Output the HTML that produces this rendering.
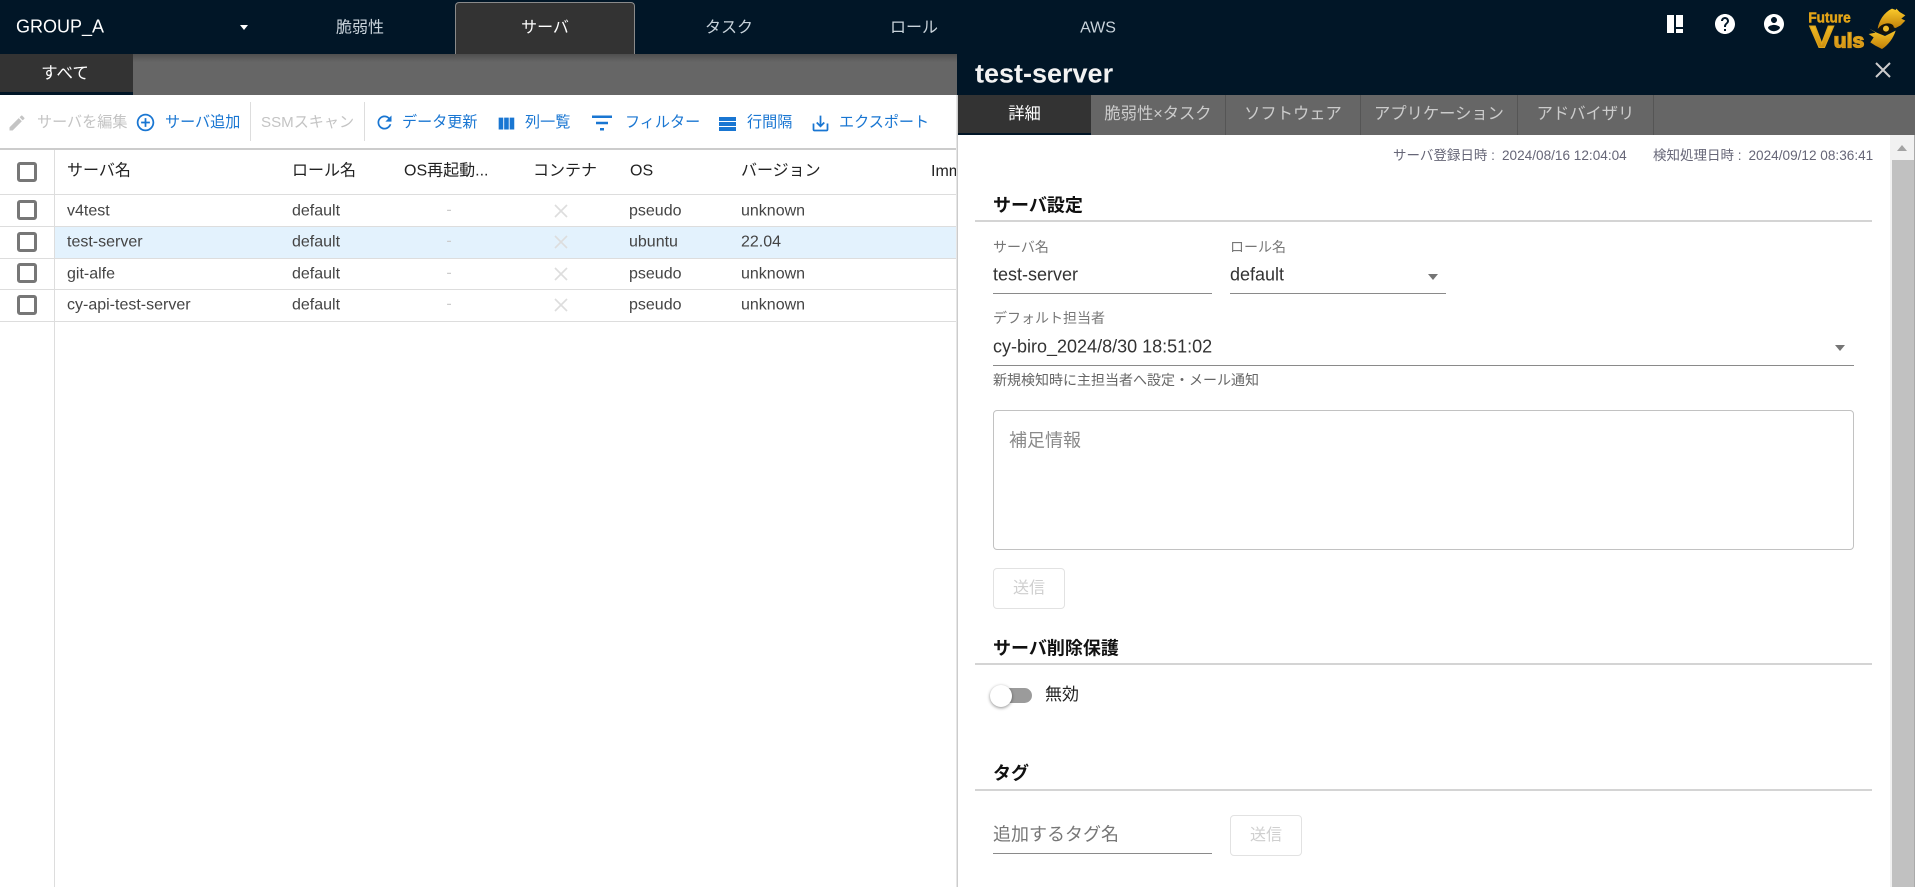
<!DOCTYPE html>
<html lang="ja"><head><meta charset="utf-8"><title>test-server</title>
<style>
html,body{margin:0;padding:0;width:1915px;height:887px;overflow:hidden;background:#fff}
body{position:relative;font-family:"Liberation Sans","Noto Sans CJK JP",sans-serif;font-size:16px;color:#333}
.a{position:absolute}
.t{position:absolute;white-space:nowrap;transform:translateY(-50%);line-height:1.3}
.c{position:absolute;white-space:nowrap;transform:translate(-50%,-50%);line-height:1.3}
.tb{font-size:15.1px;color:#1976d2}
.dis{color:#c4c4c4}
.th{color:#222}
.td{color:#444}
.cb{position:absolute;left:16.5px;width:20px;height:20px;box-sizing:border-box;border:3px solid #777;border-radius:3px;background:#fff}
.hl{position:absolute;left:0;width:956px;height:1px;background:#ddd}
.i{position:absolute;display:block}
.sec{position:absolute;left:975px;width:897px;height:2px;background:#d4d4d4}
.h{font-size:18px;font-weight:bold;color:#111}
.ln{position:absolute;height:1px;background:#8a8a8a}
.lab{font-size:14px;color:#777}
.car{position:absolute;width:0;height:0;border-left:5px solid transparent;border-right:5px solid transparent;border-top:6px solid #757575}
.btn{position:absolute;width:72px;height:41px;box-sizing:border-box;border:1px solid #e2e2e2;border-radius:4px;color:#cfcfcf;text-align:center;line-height:39px;font-size:16px}
.ptab{position:absolute;top:95px;height:40px;box-sizing:border-box;border-right:1px solid #555;color:#ccc;text-align:center;line-height:39px;font-size:16.3px}
</style></head><body>

<!-- Top bar -->
<div class="a" style="left:0;top:0;width:1915px;height:54px;background:#011627"></div>
<div class="t" style="left:16px;top:27px;color:#fff;font-size:18px">GROUP_A</div>
<div class="car" style="left:240px;top:25px;border-top-color:#fff;border-left-width:4.5px;border-right-width:4.5px;border-top-width:5px"></div>
<div class="a" style="left:455px;top:2px;width:180px;height:52px;box-sizing:border-box;background:#333;border:1px solid #8a8a8a;border-bottom:0;border-radius:4px 4px 0 0"></div>
<div class="c" style="left:360px;top:29px;color:#c9d3db">脆弱性</div>
<div class="c" style="left:545px;top:29px;color:#fff">サーバ</div>
<div class="c" style="left:729px;top:29px;color:#c9d3db">タスク</div>
<div class="c" style="left:914px;top:29px;color:#c9d3db">ロール</div>
<div class="c" style="left:1098px;top:29px;color:#c9d3db;font-size:16px">AWS</div>

<div class="a" style="left:1667px;top:15px;width:7px;height:18px;background:#fff"></div>
<div class="a" style="left:1676px;top:15px;width:7px;height:12px;background:#fff"></div>
<div class="a" style="left:1676px;top:29px;width:7px;height:4px;background:#fff"></div>
<svg class="i" style="left:1713px;top:12px" width="24" height="24" viewBox="0 0 24 24" fill="#fff"><path d="M12 2C6.48 2 2 6.48 2 12s4.48 10 10 10 10-4.48 10-10S17.52 2 12 2zm1 17h-2v-2h2v2zm2.07-7.75l-.9.92C13.45 12.9 13 13.5 13 15h-2v-.5c0-1.1.45-2.1 1.17-2.83l1.24-1.26c.37-.36.59-.86.59-1.41 0-1.1-.9-2-2-2s-2 .9-2 2H8c0-2.21 1.79-4 4-4s4 1.79 4 4c0 .88-.36 1.68-.93 2.25z"/></svg>
<svg class="i" style="left:1762px;top:12px" width="24" height="24" viewBox="0 0 24 24" fill="#fff"><path d="M12 2C6.48 2 2 6.48 2 12s4.48 10 10 10 10-4.48 10-10S17.52 2 12 2zm0 3c1.66 0 3 1.34 3 3s-1.34 3-3 3-3-1.34-3-3 1.34-3 3-3zm0 14.2c-2.5 0-4.71-1.28-6-3.22.03-1.99 4-3.08 6-3.08 1.99 0 5.97 1.09 6 3.08-1.29 1.94-3.5 3.22-6 3.22z"/></svg>

<!-- Logo -->
<svg class="i" style="left:1805px;top:0" width="110" height="60" viewBox="0 0 330 180">
<defs><linearGradient id="g" x1="0" y1="0" x2="0" y2="1"><stop offset="0" stop-color="#fbcb2c"/><stop offset="1" stop-color="#c07f08"/></linearGradient></defs>
<text x="10" y="68" font-family="Liberation Sans" font-weight="bold" font-size="44" fill="#e3a417" stroke="#e3a417" stroke-width="1.5" textLength="127" lengthAdjust="spacingAndGlyphs">Future</text>
<text x="13" y="143" font-family="Liberation Sans" font-weight="bold" font-size="95" fill="url(#g)" stroke="#e0a51a" stroke-width="3" textLength="74" lengthAdjust="spacingAndGlyphs">V</text>
<text x="86" y="143" font-family="Liberation Sans" font-weight="bold" font-size="62" fill="url(#g)" stroke="#d8991a" stroke-width="4" textLength="92" lengthAdjust="spacingAndGlyphs">uls</text>
<path d="M218 86C222 62 236 38 261 26L272 30 274 26 284 36 301 46 289 56 301 62 287 76 272 84 240 74Z" fill="url(#g)"/>
<path d="M193 86L212 98 191 102 206 112 196 127 211 137 231 147C250 135 265 115 272 92L240 108 215 98Z" fill="url(#g)"/>
<ellipse cx="243" cy="86" rx="24" ry="15" fill="#15140c" transform="rotate(-15 243 86)"/>
<circle cx="243" cy="86" r="9" fill="#efbc2a"/>
</svg>

<!-- Sub bar -->
<div class="a" style="left:0;top:54px;width:957px;height:41px;background:linear-gradient(#4f4f4f,#666 8px)"></div>
<div class="a" style="left:0;top:54px;width:133px;height:38px;background:#333"></div>
<div class="a" style="left:0;top:92px;width:133px;height:3px;background:#011627"></div>
<div class="c" style="left:65px;top:73.5px;color:#fff;font-size:16.5px">すべて</div>

<!-- Toolbar -->
<svg class="i" style="left:7px;top:113px" width="20" height="20" viewBox="0 0 24 24" fill="#c4c4c4"><path d="M3 17.25V21h3.75L17.81 9.94l-3.75-3.75L3 17.25zM20.71 7.04c.39-.39.39-1.02 0-1.41l-2.34-2.34c-.39-.39-1.02-.39-1.41 0l-1.83 1.83 3.75 3.75 1.83-1.83z"/></svg>
<div class="t tb dis" style="left:37px;top:123px">サーバを編集</div>
<svg class="i" style="left:135px;top:112px" width="21" height="21" viewBox="0 0 24 24" fill="#1976d2"><path d="M13 7h-2v4H7v2h4v4h2v-4h4v-2h-4V7zm-1-5C6.48 2 2 6.48 2 12s4.48 10 10 10 10-4.48 10-10S17.52 2 12 2zm0 18c-4.41 0-8-3.59-8-8s3.59-8 8-8 8 3.59 8 8-3.59 8-8 8z"/></svg>
<div class="t tb" style="left:165px;top:123px">サーバ追加</div>
<div class="a" style="left:250px;top:102px;width:1px;height:39px;background:#ddd"></div>
<div class="t tb dis" style="left:261px;top:123px">SSMスキャン</div>
<div class="a" style="left:364px;top:102px;width:1px;height:39px;background:#ddd"></div>
<svg class="i" style="left:374px;top:112px" width="21" height="21" viewBox="0 0 24 24" fill="#1976d2"><path d="M17.65 6.35C16.2 4.9 14.21 4 12 4c-4.42 0-7.99 3.58-7.99 8s3.57 8 7.99 8c3.73 0 6.84-2.55 7.73-6h-2.08c-.82 2.33-3.04 4-5.65 4-3.31 0-6-2.69-6-6s2.69-6 6-6c1.66 0 3.14.69 4.22 1.78L13 11h7V4l-2.35 2.35z"/></svg>
<div class="t tb" style="left:402px;top:123px">データ更新</div>
<svg class="i" style="left:495px;top:113px" width="22" height="22" viewBox="0 0 24 24" fill="#1976d2"><path d="M10 18h5V5h-5v13zm-6 0h5V5H4v13zM16 5v13h5V5h-5z"/></svg>
<div class="t tb" style="left:525px;top:123px">列一覧</div>
<svg class="i" style="left:590px;top:108px" width="24" height="30" viewBox="0 0 24 24" preserveAspectRatio="none" fill="#1976d2"><path d="M10 18h4v-2h-4v2zM2 6v2h20V6H2zm4 7h12v-2H6v2z"/></svg>
<div class="t tb" style="left:625px;top:123px">フィルター</div>
<div class="a" style="left:719px;top:117px;width:17px;height:3.5px;background:#1976d2"></div>
<div class="a" style="left:719px;top:122px;width:17px;height:3.5px;background:#1976d2"></div>
<div class="a" style="left:719px;top:127px;width:17px;height:3.5px;background:#1976d2"></div>
<div class="t tb" style="left:747px;top:123px">行間隔</div>
<svg class="i" style="left:810px;top:113px" width="21" height="21" viewBox="0 0 24 24" fill="#1976d2"><path d="M19 12v7H5v-7H3v7c0 1.1.9 2 2 2h14c1.1 0 2-.9 2-2v-7h-2zm-6 .67l2.59-2.58L17 11.5l-5 5-5-5 1.41-1.41L11 12.67V3h2z"/></svg>
<div class="t tb" style="left:839px;top:123px">エクスポート</div>

<!-- Table -->
<div class="a" style="left:0;top:148px;width:956px;height:2px;background:#ccc"></div>
<div class="a" style="left:55px;top:227px;width:901px;height:31px;background:#e3f2fd"></div>
<div class="a" style="left:54px;top:150px;width:1px;height:737px;background:#ddd"></div>
<div class="hl" style="top:194px"></div><div class="hl" style="top:226px"></div><div class="hl" style="top:258px"></div><div class="hl" style="top:289px"></div><div class="hl" style="top:321px"></div>

<div class="cb" style="top:162px"></div><div class="cb" style="top:200px"></div><div class="cb" style="top:232px"></div><div class="cb" style="top:263px"></div><div class="cb" style="top:295px"></div>

<div class="t th" style="left:67px;top:172px">サーバ名</div>
<div class="t th" style="left:292px;top:172px">ロール名</div>
<div class="t th" style="left:404px;top:172px">OS再起動...</div>
<div class="t th" style="left:533px;top:172px">コンテナ</div>
<div class="t th" style="left:630px;top:172px">OS</div>
<div class="t th" style="left:741px;top:172px">バージョン</div>
<div class="a" style="left:931px;top:161px;width:25px;height:22px;overflow:hidden;white-space:nowrap;line-height:21px;color:#222">Immutable</div>

<div class="t td" style="left:67px;top:212px">v4test</div><div class="t td" style="left:292px;top:212px">default</div><div class="c" style="left:449px;top:211px;color:#ccc">-</div><div class="t td" style="left:629px;top:212px">pseudo</div><div class="t td" style="left:741px;top:212px">unknown</div>
<div class="t td" style="left:67px;top:243px">test-server</div><div class="t td" style="left:292px;top:243px">default</div><div class="c" style="left:449px;top:242px;color:#ccc">-</div><div class="t td" style="left:629px;top:243px">ubuntu</div><div class="t td" style="left:741px;top:243px">22.04</div>
<div class="t td" style="left:67px;top:275px">git-alfe</div><div class="t td" style="left:292px;top:275px">default</div><div class="c" style="left:449px;top:274px;color:#ccc">-</div><div class="t td" style="left:629px;top:275px">pseudo</div><div class="t td" style="left:741px;top:275px">unknown</div>
<div class="t td" style="left:67px;top:306px">cy-api-test-server</div><div class="t td" style="left:292px;top:306px">default</div><div class="c" style="left:449px;top:305px;color:#ccc">-</div><div class="t td" style="left:629px;top:306px">pseudo</div><div class="t td" style="left:741px;top:306px">unknown</div>

<svg class="i" style="left:553px;top:203px" width="16" height="16" viewBox="0 0 16 16" stroke="#ddd" stroke-width="1.6"><path d="M2 2L14 14M14 2L2 14"/></svg>
<svg class="i" style="left:553px;top:234px" width="16" height="16" viewBox="0 0 16 16" stroke="#ddd" stroke-width="1.6"><path d="M2 2L14 14M14 2L2 14"/></svg>
<svg class="i" style="left:553px;top:266px" width="16" height="16" viewBox="0 0 16 16" stroke="#ddd" stroke-width="1.6"><path d="M2 2L14 14M14 2L2 14"/></svg>
<svg class="i" style="left:553px;top:297px" width="16" height="16" viewBox="0 0 16 16" stroke="#ddd" stroke-width="1.6"><path d="M2 2L14 14M14 2L2 14"/></svg>

<!-- Panel -->
<div class="a" style="left:956px;top:95px;width:1px;height:792px;background:#e6e6e6"></div>
<div class="a" style="left:957px;top:95px;width:1px;height:792px;background:#ccc"></div>
<div class="a" style="left:957px;top:54px;width:958px;height:41px;background:#011627"></div>
<div class="t" style="left:975px;top:74px;color:#f2f2f2;font-size:27px;font-weight:bold">test-server</div>
<svg class="i" style="left:1875px;top:62px" width="16" height="16" viewBox="0 0 16 16" stroke="#ccc" stroke-width="2"><path d="M1 1L15 15M15 1L1 15"/></svg>

<div class="a" style="left:958px;top:95px;width:957px;height:40px;background:#666"></div>
<div class="ptab" style="left:958px;width:133px;height:38px;background:#333;color:#fff;border:0">詳細</div>
<div class="a" style="left:958px;top:133px;width:133px;height:2px;background:#011627"></div>
<div class="ptab" style="left:1091px;width:135px">脆弱性×タスク</div>
<div class="ptab" style="left:1226px;width:135px">ソフトウェア</div>
<div class="ptab" style="left:1361px;width:157px">アプリケーション</div>
<div class="ptab" style="left:1518px;width:136px">アドバイザリ</div>

<!-- Scrollbar -->
<div class="a" style="left:1890px;top:135px;width:24px;height:752px;background:#f1f1f1"></div>
<div class="a" style="left:1892px;top:160px;width:22px;height:727px;background:#c1c1c1"></div>
<div class="a" style="left:1914px;top:135px;width:1px;height:752px;background:#aaa"></div>
<div class="a" style="left:1897px;top:145px;width:0;height:0;border-left:5.5px solid transparent;border-right:5.5px solid transparent;border-bottom:6px solid #a3a3a3"></div>

<!-- Details -->
<div class="t" style="left:1393px;top:156px;font-size:13.5px;color:#667">サーバ登録日時 :</div>
<div class="t" style="left:1502px;top:156px;font-size:13.6px;color:#667">2024/08/16 12:04:04</div>
<div class="t" style="left:1653px;top:156px;font-size:13.5px;color:#667">検知処理日時 :</div>
<div class="t" style="left:1748.5px;top:156px;font-size:13.6px;color:#667">2024/09/12 08:36:41</div>

<div class="t h" style="left:993px;top:206px">サーバ設定</div>
<div class="sec" style="top:220px"></div>

<div class="t lab" style="left:993px;top:247px">サーバ名</div>
<div class="t" style="left:993px;top:275px;font-size:18px">test-server</div>
<div class="ln" style="left:993px;top:293px;width:219px"></div>
<div class="t lab" style="left:1230px;top:247px">ロール名</div>
<div class="t" style="left:1230px;top:275px;font-size:18px">default</div>
<div class="car" style="left:1428px;top:274px"></div>
<div class="ln" style="left:1230px;top:293px;width:216px"></div>

<div class="t lab" style="left:993px;top:318px">デフォルト担当者</div>
<div class="t" style="left:993px;top:347px;font-size:18px">cy-biro_2024/8/30 18:51:02</div>
<div class="car" style="left:1835px;top:345px"></div>
<div class="ln" style="left:993px;top:365px;width:861px"></div>
<div class="t" style="left:993px;top:380px;font-size:14px;color:#666">新規検知時に主担当者へ設定・メール通知</div>

<div class="a" style="left:993px;top:410px;width:861px;height:140px;box-sizing:border-box;border:1px solid #c2c2c2;border-radius:4px"></div>
<div class="t" style="left:1009px;top:441px;font-size:18px;color:#8a8a8a">補足情報</div>
<div class="btn" style="left:993px;top:568px">送信</div>

<div class="t h" style="left:993px;top:649px">サーバ削除保護</div>
<div class="sec" style="top:663px"></div>
<div class="a" style="left:1003px;top:688px;width:29px;height:15px;background:#9b9b9b;border-radius:8px"></div>
<div class="a" style="left:990px;top:685px;width:22px;height:22px;border-radius:50%;background:#fff;box-shadow:0 1px 3px rgba(0,0,0,.45)"></div>
<div class="t" style="left:1045px;top:695px;font-size:17px;color:#222">無効</div>

<div class="t h" style="left:993px;top:774px">タグ</div>
<div class="sec" style="top:789px"></div>
<div class="t" style="left:993px;top:835px;font-size:18px;color:#777">追加するタグ名</div>
<div class="ln" style="left:993px;top:853px;width:219px"></div>
<div class="btn" style="left:1230px;top:815px">送信</div>

</body></html>
